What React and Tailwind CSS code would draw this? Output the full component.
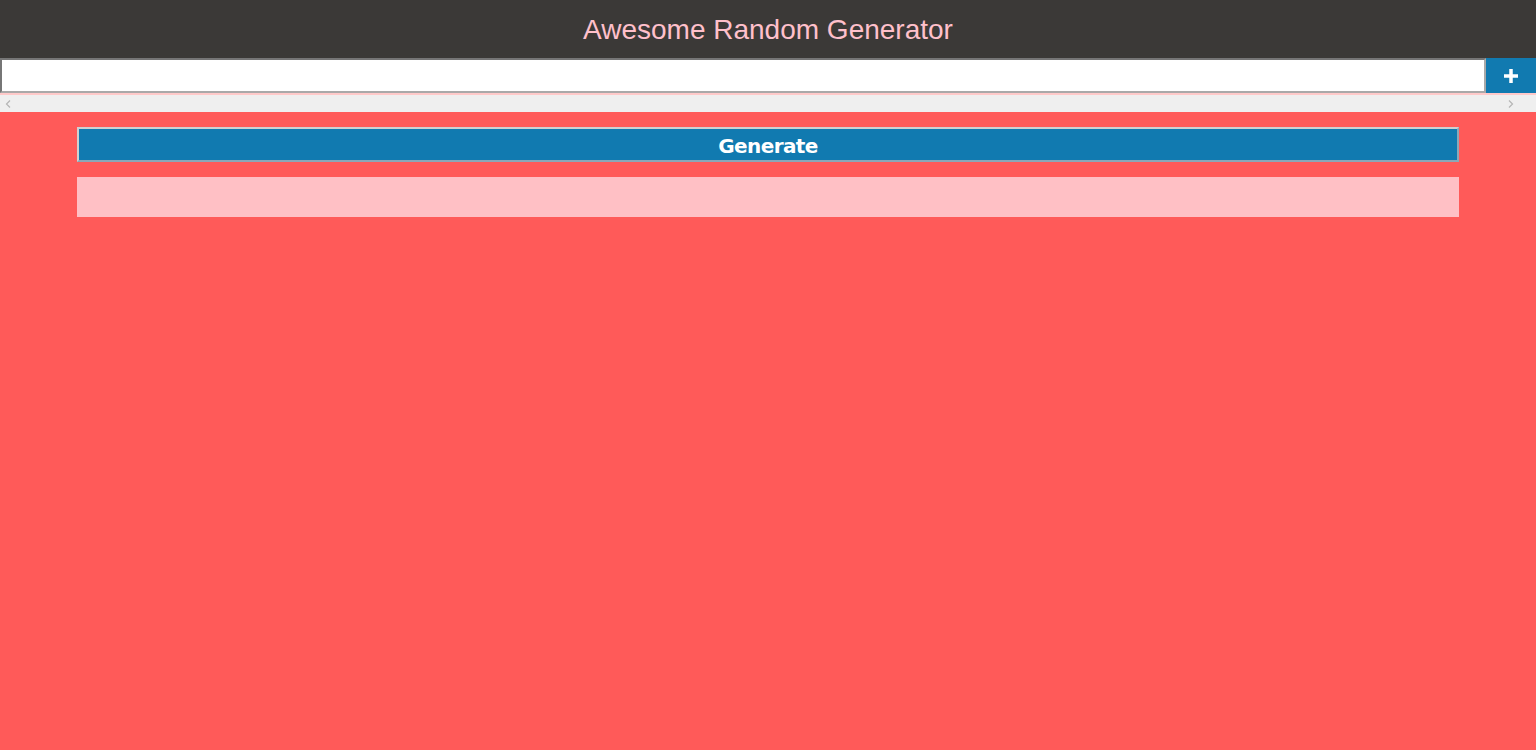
import React, { useState } from 'react'

export default function App(){
  const [value, setValue] = useState('')
  const [result, setResult] = useState('')

  return (
    <div className="min-h-[750px] bg-[#ff5a59] font-['Liberation_Sans',Arial,sans-serif]">
      <header className="h-[58px] bg-[#3b3937] flex items-center justify-center pt-[2px]">
        <h1 className="text-[28px] text-[#ffc0cb] leading-none">Awesome Random Generator</h1>
      </header>
      <div className="flex h-[35px] bg-white">
        <input
          className="flex-1 h-[35px] border-2 border-t-[#767676] border-l-[#767676] border-b-[#a9a9a9] border-r-[#a9a9a9] bg-white outline-none px-1"
          value={value}
          onChange={e=>setValue(e.target.value)}
        />
        <button className="w-[50px] h-[35px] bg-[#117ab0] text-white flex items-center justify-center">
          <svg width="18" height="18" viewBox="0 0 18 18">
            <path d="M9 2v14M2 9h14" stroke="white" strokeWidth="3.5" />
          </svg>
        </button>
      </div>
      <div className="h-[2px] bg-[#ffc9c9]"></div>
      <div className="h-[17px] bg-[#efefef] flex items-center justify-between px-[5px]">
        <svg width="6" height="8" viewBox="0 0 6 8"><path d="M5 0.5L1.5 4L5 7.5" stroke="#b5b5b5" strokeWidth="1.2" fill="none" /></svg>
        <svg width="6" height="8" viewBox="0 0 6 8" className="mr-[17px]"><path d="M1 0.5L4.5 4L1 7.5" stroke="#b5b5b5" strokeWidth="1.2" fill="none" /></svg>
      </div>
      <div className="w-[90%] mx-auto pt-[15px]">
        <button
          onClick={()=>setResult(value)}
          className="w-full h-[35px] bg-[#117ab0] text-white font-bold text-[20px] font-['DejaVu_Sans',Verdana,sans-serif] border-2 border-t-[#d0d0d0] border-l-[#d0d0d0] border-r-[#8aa8b8] border-b-[#8aa8b8] flex items-center justify-center pt-[2px] tracking-[-0.6px]"
        >
          Generate
        </button>
        <div className="mt-[15px] h-[40px] bg-[#ffc0c5]">{result}</div>
      </div>
    </div>
  )
}
